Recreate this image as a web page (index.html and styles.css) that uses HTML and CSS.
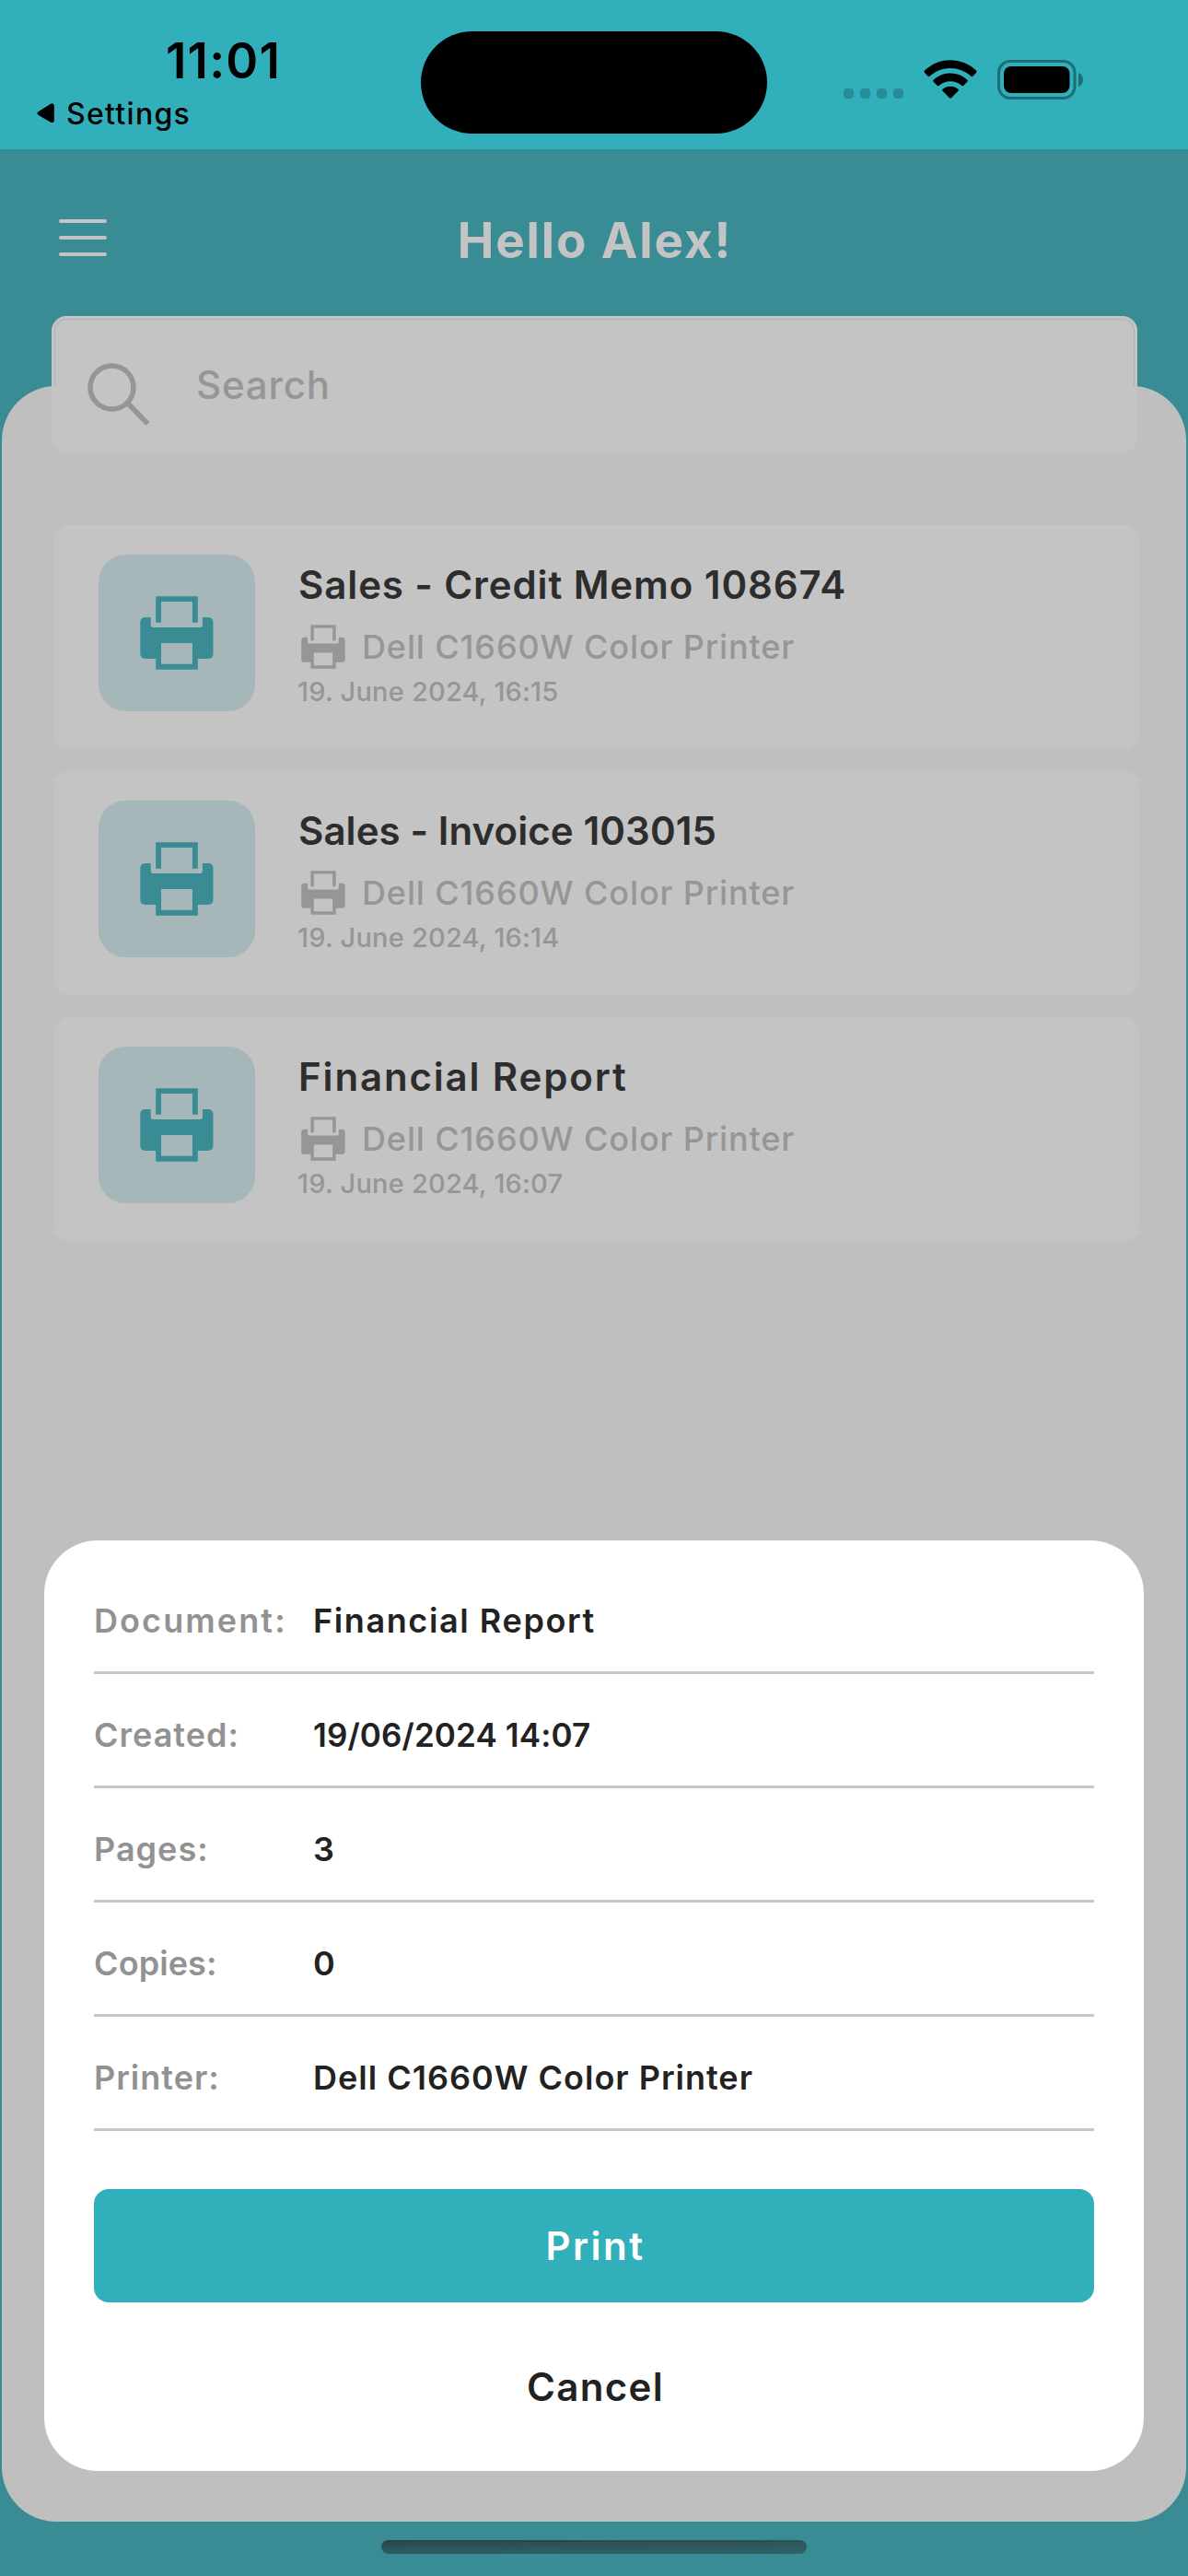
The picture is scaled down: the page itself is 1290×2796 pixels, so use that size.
FILE: index.html
```
<!DOCTYPE html>
<html lang="en">
<head>
<meta charset="utf-8">
<title>Print document</title>
<link rel="stylesheet" href="styles.css">
</head>
<body>
<svg class="defs" width="0" height="0" aria-hidden="true">
  <symbol id="printer" viewBox="0 0 80 80">
    <path d="M17.2 28.7V.3h45.6v28.4h-5.9V6H23v22.7z"/>
    <path fill-rule="evenodd" d="M5.5 23h6.2v8.3q0 2.7 2.7 2.7h50.8q2.7 0 2.7-2.7V23h5.9q5.7 0 5.7 5.7v33.6q0 5.7-5.7 5.7h-11v11.7H17.2V68H6Q.3 68 .3 62.300V28.700Q.3 23 6 23zM23 51v22.700h33.900V51z"/>
  </symbol>
</svg>
<div class="screen">
  <header class="status">
    <div class="status-left">
      <div class="clock">11:01</div>
      <div class="back">
        <svg class="back-arrow" viewBox="0 0 22 26"><path d="M2 10.500 17.500.8Q22-1 22 3.500v19Q22 26 17.500 24.500L2 15.300q-3.500-2.400 0-4.800z"/></svg>
        <span>Settings</span>
      </div>
    </div>
    <div class="island"></div>
    <div class="status-right">
      <div class="signal"><i></i><i></i><i></i><i></i></div>
      <svg class="wifi" viewBox="0 0 58 42">
        <path d="M1 11.500Q13 .2 29 .2T57 11.500Q58 12.700 57.200 13.800L53.300 17.800Q52.300 18.600 51.300 17.600 41.500 9 29 9T6.700 17.600Q5.700 18.600 4.700 17.800L.8 13.800Q0 12.700 1 11.500z"/>
        <path d="M10.800 21.600Q18.500 14.600 29 14.600t18.200 7Q48.200 22.700 47.300 23.700L43.200 27.900Q42.300 28.700 41.300 27.900 36 23.300 29 23.300T16.700 27.900Q15.700 28.700 14.800 27.900L10.700 23.700Q9.800 22.700 10.800 21.600z"/>
        <path d="M20.700 31.600Q24 28.700 29 28.700t8.300 2.900Q38.300 32.600 37.400 33.700L30 41.300Q29 42.200 28 41.300L20.600 33.700Q19.700 32.600 20.700 31.600z"/>
      </svg>
      <svg class="battery" viewBox="0 0 94 43">
        <rect x="1.500" y="1.500" width="82.500" height="40" rx="12.500" fill="none" stroke="#1d6d75" stroke-width="3"/>
        <rect x="7" y="7" width="71.500" height="29" rx="8"/>
        <path d="M88 14q5 2 5 7.500T88 29z" fill="#1d6d75"/>
      </svg>
    </div>
  </header>

  <main class="app">
    <nav class="topbar">
      <div class="menu"><i></i><i></i><i></i></div>
      <h1>Hello Alex!</h1>
    </nav>
    <div class="search">
      <svg class="search-icon" viewBox="0 0 70 70"><circle cx="26.500" cy="26.500" r="23.500"/><path d="M43 43 65.500 66"/></svg>
      <span>Search</span>
    </div>
    <section class="sheet">
      <article class="job">
        <div class="tile"><svg><use href="#printer"/></svg></div>
        <div class="info">
          <h2 class="t-memo">Sales - Credit Memo 108674</h2>
          <p class="device"><svg><use href="#printer"/></svg><span>Dell C1660W Color Printer</span></p>
          <p class="date">19. June 2024, 16:15</p>
        </div>
      </article>
      <article class="job">
        <div class="tile"><svg><use href="#printer"/></svg></div>
        <div class="info">
          <h2 class="t-invoice">Sales - Invoice 103015</h2>
          <p class="device"><svg><use href="#printer"/></svg><span>Dell C1660W Color Printer</span></p>
          <p class="date">19. June 2024, 16:14</p>
        </div>
      </article>
      <article class="job">
        <div class="tile"><svg><use href="#printer"/></svg></div>
        <div class="info">
          <h2 class="t-report">Financial Report</h2>
          <p class="device"><svg><use href="#printer"/></svg><span>Dell C1660W Color Printer</span></p>
          <p class="date">19. June 2024, 16:07</p>
        </div>
      </article>
    </section>
    <div class="home"></div>
  </main>

  <div class="dialog">
    <dl>
      <div class="row"><dt class="k-doc">Document:</dt><dd class="v-doc">Financial Report</dd></div>
      <div class="row"><dt>Created:</dt><dd class="v-num">19/06/2024 14:07</dd></div>
      <div class="row"><dt>Pages:</dt><dd>3</dd></div>
      <div class="row"><dt class="k-copies">Copies:</dt><dd>0</dd></div>
      <div class="row"><dt>Printer:</dt><dd>Dell C1660W Color Printer</dd></div>
    </dl>
    <button class="print">Print</button>
    <button class="cancel">Cancel</button>
  </div>
</div>
</body>
</html>
```
FILE: styles.css
```
* { box-sizing: border-box; margin: 0; padding: 0; }

body { background: #398c93; font-family: Inter, "Liberation Sans", sans-serif; }

.defs { display: block; position: absolute; }

.screen {
  position: relative;
  display: flex;
  flex-direction: column;
  width: 1290px;
  height: 2796px;
  overflow: hidden;
}

h1, h2, p, span, dt, dd, .clock { white-space: nowrap; }

/* Status bar */
.status {
  display: grid;
  grid-template-columns: 457px 376px 1fr;
  height: 162px;
  background: #31afba;
  color: #000;
}
.status-left { padding-top: 36px; }
.clock {
  padding-left: 180px;
  font-size: 53px;
  font-weight: 600;
  line-height: 60px;
  letter-spacing: 1.2px;
}
.back {
  display: flex;
  align-items: center;
  gap: 12px;
  height: 40px;
  margin-top: 7px;
  padding-left: 39px;
  font-size: 32px;
  font-weight: 500;
  letter-spacing: 1.3px;
}
.back-arrow { width: 21px; height: 22px; }
.island { height: 111px; margin-top: 33.500px; border-radius: 56px; background: #000; }
.status-right { display: flex; align-items: flex-start; padding: 65px 0 0 83px; }
.signal { display: flex; gap: 7px; margin-top: 31px; }
.signal i { width: 11px; height: 11px; border-radius: 4px; background: #268d96; }
.wifi { width: 58px; height: 42px; margin-left: 22px; }
.battery { width: 94px; height: 43px; margin-left: 22px; }

/* Screen behind the dialog */
.app { display: flex; flex: 1; flex-direction: column; }
.topbar {
  display: grid;
  grid-template-columns: 1fr auto 1fr;
  align-items: center;
  height: 181px;
  padding: 0 64px;
  color: #c4c4c4;
}
.menu { display: grid; gap: 14px; width: 52px; margin-bottom: -10px; }
.menu i { height: 4px; border-radius: 2px; background: #c4c4c4; }
.topbar h1 {
  padding: 17px 0 0 2px;
  font-size: 53px;
  font-weight: 700;
  line-height: 60px;
  letter-spacing: 1.87px;
}

.search {
  position: relative;
  z-index: 1;
  display: flex;
  align-items: center;
  height: 148px;
  margin: 0 55px 0 56px;
  padding-left: 38px;
  border-radius: 16px;
  background: #c4c4c4;
  color: #979595;
  font-size: 42px;
  font-weight: 450;
  letter-spacing: .8px;
}
.search::before {
  content: "";
  position: absolute;
  inset: 3px 3px 72px;
  border: solid #a2b8bd;
  border-width: 1px 1px 0;
  border-radius: 13px 13px 0 0;
}
.search-icon { width: 70px; height: 70px; margin: 24px 48px 0 1px; fill: none; stroke: #979595; stroke-width: 5.5; }

.sheet {
  display: flex;
  flex-direction: column;
  gap: 24px;
  height: 2318px;
  margin: -72px 2px 0;
  padding: 151px 51px 0 57px;
  border-radius: 59px;
  background: #bfbfbf;
}
.job {
  display: flex;
  gap: 46px;
  height: 243px;
  padding: 32px 48px;
  border-radius: 16px;
  background: #c4c4c4;
}
.tile {
  display: grid;
  place-items: center;
  width: 170px;
  height: 170px;
  border-radius: 29px;
  background: #a6b7ba;
}
.tile svg { width: 80px; height: 80px; fill: #398c93; }
.info { padding-top: 8px; color: #979595; }
.info h2 {
  padding-left: 1px;
  color: #2d2d2d;
  font-size: 42px;
  font-weight: 600;
  line-height: 50px;
  letter-spacing: .9px;
}
.info .t-invoice { letter-spacing: .09px; }
.info .t-report { letter-spacing: 1.85px; }
.device {
  display: flex;
  align-items: center;
  gap: 18px;
  height: 48px;
  margin-top: 18px;
  padding-left: 4px;
  font-size: 36px;
  font-weight: 500;
  letter-spacing: .88px;
}
.device svg { width: 48px; height: 48px; fill: #979595; }
.date { font-size: 29px; font-weight: 500; line-height: 34px; margin-top: 8px; letter-spacing: .2px; }

.home {
  width: 462px;
  height: 15px;
  margin: 20px auto 0;
  border-radius: 8px;
  background: linear-gradient(176deg, #2b444800, #326c72 200%), linear-gradient(#2b4448, #2f5a5f);
}

/* Dialog */
.dialog {
  position: absolute;
  left: 48px;
  top: 1672px;
  width: 1194px;
  height: 1010px;
  padding: 21px 54px 0;
  border-radius: 58px;
  background: #fff;
  color: #222;
}
.row {
  display: grid;
  grid-template-columns: 238px 1fr;
  height: 124px;
  border-bottom: 3px solid #cac4d0;
  font-size: 36px;
  font-weight: 600;
  line-height: 132px;
  letter-spacing: 1px;
}
dt { color: #929292; }
.k-doc { letter-spacing: 2.1px; }
.k-copies { letter-spacing: .1px; }
.v-doc { letter-spacing: 1.6px; }
.v-num { font-size: 35px; letter-spacing: .12px; }
.print, .cancel {
  display: block;
  width: 100%;
  height: 123px;
  padding-left: 3px;
  border: 0;
  border-radius: 16px;
  font: 600 42px/123px Inter, "Liberation Sans", sans-serif;
}
.print { margin-top: 63px; background: #31afba; color: #fff; letter-spacing: 2.5px; }
.cancel { margin-top: 30px; background: none; color: #222; letter-spacing: 1.35px; }
```
